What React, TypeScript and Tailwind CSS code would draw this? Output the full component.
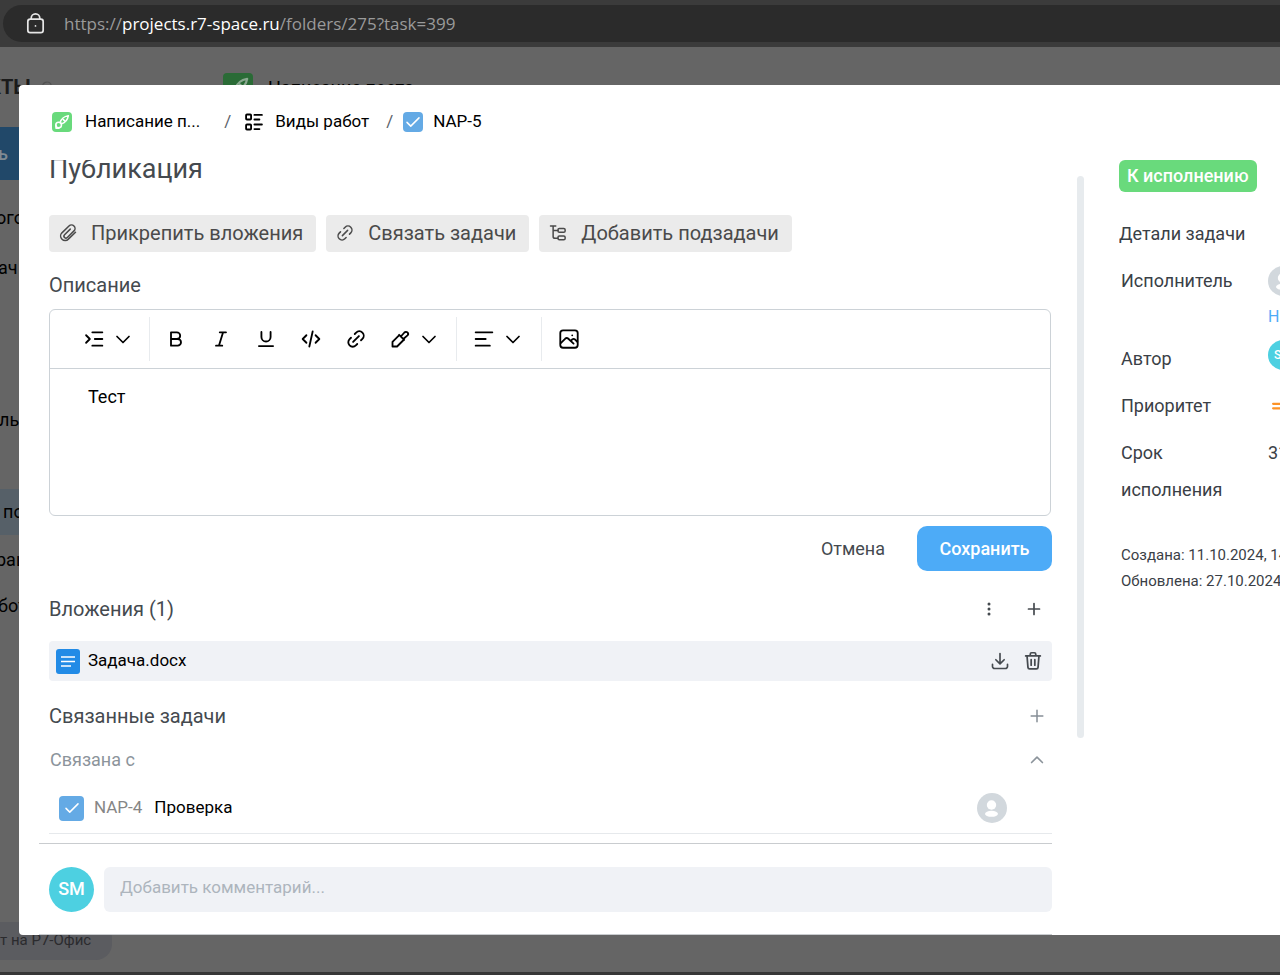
import type { ReactNode } from "react";

type IconProps = {
  size?: number;
  stroke?: number;
  className?: string;
  children: ReactNode;
};

function Icon({ size = 24, stroke = 1.8, className = "", children }: IconProps) {
  return (
    <svg
      width={size}
      height={size}
      viewBox="0 0 24 24"
      fill="none"
      stroke="currentColor"
      strokeWidth={stroke}
      strokeLinecap="round"
      strokeLinejoin="round"
      className={`shrink-0 ${className}`}
      aria-hidden="true"
    >
      {children}
    </svg>
  );
}

const linkPath = (
  <>
    <path d="M8.5 15.5l7-7" />
    <path d="M10.500 6l1.700-1.700a5.300 5.300 0 0 1 7.500 7.500L18 13.500" />
    <path d="M13.500 18l-1.700 1.700a5.300 5.300 0 0 1-7.500-7.500L6 10.500" />
  </>
);

const plusPath = <path d="M12 5v14M5 12h14" />;

function BrushBadge({ size, className }: { size: number; className: string }) {
  return (
    <span className={`flex shrink-0 items-center justify-center ${className}`}>
      <Icon size={size} stroke={2}>
        <path d="M20.500 3.500C15 4.500 11 8 9.500 12.500l2 2C16 13 19.500 9 20.500 3.500z" />
        <path d="M13.500 8.500l2 2" />
        <circle cx="7.500" cy="16" r="3.800" />
        <path d="M4 16v4.200h4" />
      </Icon>
    </span>
  );
}

function TaskBadge({ className }: { className: string }) {
  return (
    <span
      className={`flex shrink-0 items-center justify-center bg-[#64aae5] text-white ${className}`}
    >
      <Icon size={18} stroke={2}>
        <path d="M4 12.500l5 5L20 6.500" />
      </Icon>
    </span>
  );
}

function EmptyAvatar() {
  return (
    <svg width="30" height="30" viewBox="0 0 30 30" className="shrink-0" aria-hidden="true">
      <circle cx="15" cy="15" r="15" fill="#d2d8dd" />
      <circle cx="14.500" cy="12" r="4.700" fill="#fff" />
      <ellipse cx="14.500" cy="20.800" rx="6.500" ry="3" fill="#fff" />
    </svg>
  );
}

const actions = [
  {
    label: "Прикрепить вложения",
    icon: (
      <path d="M22 11l-9.500 9.200a6 6 0 0 1-8.600-8.400l9.400-9.200a4.700 4.700 0 0 1 6.700 6.600l-8.900 8.800a2.600 2.600 0 0 1-3.700-3.700l7.600-7.500" />
    ),
  },
  { label: "Связать задачи", icon: linkPath },
  {
    label: "Добавить подзадачи",
    icon: (
      <>
        <path d="M2 2.500h7M5.500 2.500V16.500a2.500 2.500 0 0 0 2.500 2.500h4M5.500 8.500H12" />
        <rect x="12" y="6" width="9.500" height="5" rx="1.800" />
        <rect x="12" y="16" width="9.500" height="5" rx="1.800" />
      </>
    ),
  },
];

const textTools = [
  {
    label: "Жирный",
    icon: <path d="M6 4h7a4 4 0 0 1 0 8H6zM6 12h8a4 4 0 0 1 0 8H6z" />,
  },
  { label: "Курсив", icon: <path d="M10.500 4H18M6 20h7.500M14.500 4l-5 16" /> },
  { label: "Подчёркнутый", icon: <path d="M6.500 3.500V9.500a5.500 5.500 0 0 0 11 0V3.500M3.500 20.500h17" /> },
  { label: "Код", icon: <path d="M6.500 7.500L2 12l4.500 4.500M17.500 7.500L22 12l-4.500 4.500M14 3l-4 18" /> },
  { label: "Ссылка", icon: linkPath },
];

function ToolMenu({ label, children }: { label: string; children: ReactNode }) {
  return (
    <button
      type="button"
      aria-label={label}
      className="flex h-11 items-center gap-[5px] px-2.5"
    >
      <Icon size={20} stroke={2.2} className="mx-0.5">
        {children}
      </Icon>
      <Icon stroke={1.7}>
        <path d="M6 9.500l6 6 6-6" />
      </Icon>
    </button>
  );
}

function Toolbar() {
  return (
    <div className="flex h-[59px] items-center border-b border-[#ccd2d7] pl-[22px] text-black">
      <div className="flex border-r border-[#e8ebee] pr-1">
        <ToolMenu label="Отступ">
          <path d="M2.500 7.500L7 12l-4.500 4.500M10 4h12M13 12h9M10 20h12" />
        </ToolMenu>
      </div>
      <div className="flex border-r border-[#e8ebee] pr-[5px] pl-[3px]">
        {textTools.map((tool) => (
          <button
            key={tool.label}
            type="button"
            aria-label={tool.label}
            className="flex h-11 w-[45px] items-center justify-center"
          >
            <Icon size={20} stroke={2.2}>
              {tool.icon}
            </Icon>
          </button>
        ))}
        <ToolMenu label="Цвет">
          <path d="M10.500 8L3 15.500V21h5.500L16 13.500" />
          <path d="M11 7l6 6M13 9l4.300-4.800a2.500 2.500 0 0 1 3.700 3.500L16 12" />
        </ToolMenu>
      </div>
      <div className="flex border-r border-[#e8ebee] pr-1.5 pl-[5px]">
        <ToolMenu label="Выравнивание">
          <path d="M2 4h20M2 12h12M2 20h17" />
        </ToolMenu>
      </div>
      <div className="flex pl-1">
        <button
          type="button"
          aria-label="Изображение"
          className="flex h-11 w-[45px] items-center justify-center"
        >
          <Icon size={22} stroke={2}>
            <rect x="2.500" y="2.500" width="19" height="19" rx="3" />
            <path d="M3 16.500l5-5c1-.9 2-.9 3 0l6 5.500M14 14l1.500-1.500c1-.9 2-.9 3 0L21 15M15.500 8h.01" />
          </Icon>
        </button>
      </div>
    </div>
  );
}

function Breadcrumbs() {
  return (
    <nav className="flex h-[75px] items-center pb-0.5 pl-[3px] text-[17px] text-black">
      <a href="#project" className="flex items-center gap-[13px]">
        <BrushBadge size={18} className="size-5 rounded bg-[#69da7c] text-white" />
        Написание п...
      </a>
      <span className="ml-6 text-[#5b6269]">/</span>
      <a href="#boards" className="ml-[13px] flex items-center gap-[11px]">
        <Icon size={20} stroke={2.2}>
          <rect x="2.500" y="3" width="6" height="6" rx="1" />
          <rect x="2.500" y="15" width="6" height="6" rx="1" />
          <path d="M12.500 3.500h9M12.500 9h6M12.500 15h9M12.500 20.500h6" />
        </Icon>
        Виды работ
      </a>
      <span className="ml-[17px] text-[#5b6269]">/</span>
      <a href="#task" className="ml-2.5 flex items-center gap-2.5">
        <TaskBadge className="size-5 rounded" />
        NAP-5
      </a>
    </nav>
  );
}

function Attachments() {
  return (
    <section className="mt-6">
      <div className="flex h-7 items-center pr-1.5">
        <h2 className="mr-auto text-xl">Вложения (1)</h2>
        <button type="button" aria-label="Ещё">
          <Icon stroke={3}>
            <path d="M12 7h.01M12 12h.01M12 17h.01" />
          </Icon>
        </button>
        <button type="button" aria-label="Добавить вложение" className="ml-[21px]">
          <Icon size={24} stroke={1.7}>
            <path d="M12 6.500v11M6.500 12h11" />
          </Icon>
        </button>
      </div>
      <div className="mt-[18px] flex h-10 items-center rounded bg-[#f0f2f6] pr-2 pl-[7px]">
        <svg width="24" height="25" viewBox="0 0 24 25" aria-hidden="true">
          <rect width="24" height="25" rx="3" fill="#228be6" />
          <path d="M5 8h14M5 12.500h14M5 17h10" stroke="#fff" strokeWidth="1.500" />
        </svg>
        <a href="#file" className="mr-auto ml-2 text-[17px] text-black">
          Задача.docx
        </a>
        <button type="button" aria-label="Скачать">
          <Icon size={20} stroke={2}>
            <path d="M12 3v12M7 10.500l5 5 5-5M3 16v2.500A2.500 2.500 0 0 0 5.500 21h13a2.500 2.500 0 0 0 2.500-2.500V16" />
          </Icon>
        </button>
        <button type="button" aria-label="Удалить" className="ml-3">
          <Icon size={22} stroke={1.900}>
            <path d="M4 6.500h16M9 6V4.500A1.500 1.500 0 0 1 10.500 3h3A1.500 1.500 0 0 1 15 4.500V6M5.500 6.500l1 12.500a1.800 1.800 0 0 0 1.800 1.700h7.400a1.800 1.800 0 0 0 1.800-1.700l1-12.500M10 10.500v6M14 10.500v6" />
          </Icon>
        </button>
      </div>
    </section>
  );
}

function LinkedTasks() {
  return (
    <section className="mt-[21px]">
      <div className="flex h-7 items-center justify-between pr-[5px]">
        <h2 className="text-xl">Связанные задачи</h2>
        <button type="button" aria-label="Связать задачу" className="text-[#868e96]">
          <Icon size={20} stroke={1.800}>
            {plusPath}
          </Icon>
        </button>
      </div>
      <button
        type="button"
        className="mt-4 flex h-7 w-full items-center justify-between pr-[5px] pl-px text-lg text-[#8c949b]"
      >
        Связана с
        <Icon size={20} stroke={2}>
          <path d="M5.500 15l6.500-6.500 6.500 6.500" />
        </Icon>
      </button>
      <div className="mt-[9px] flex h-[51px] items-center border-b border-[#e6e9ec] pr-[45px] pl-2.5">
        <TaskBadge className="size-[25px] rounded" />
        <span className="ml-2.5 text-[17px] text-[#868686]">NAP-4</span>
        <a href="#nap-4" className="mr-auto ml-3 text-[17px] text-black">
          Проверка
        </a>
        <EmptyAvatar />
      </div>
    </section>
  );
}

function Details() {
  return (
    <aside className="ml-[35px] w-[161px] shrink-0 overflow-hidden pt-[75px] whitespace-nowrap text-lg text-[#3a4046]">
      <button
        type="button"
        className="flex h-8 items-center rounded-md bg-[#69da7c] px-2 text-lg font-medium text-white"
      >
        К исполнению
      </button>
      <h2 className="mt-7 leading-7">Детали задачи</h2>
      <dl className="mt-3.5 ml-0.5 grid grid-cols-[147px_1fr] gap-y-2.5 leading-[37px]">
        <dt>Исполнитель</dt>
        <dd className="pt-1">
          <EmptyAvatar />
          <a href="#assign" className="mt-2 block text-base leading-[26px] text-[#4dabf7]">
            На
          </a>
        </dd>
        <dt>Автор</dt>
        <dd>
          <span className="flex size-[30px] items-center justify-center rounded-full bg-[#4dd0e1] text-xs font-medium text-white">
            SM
          </span>
        </dd>
        <dt>Приоритет</dt>
        <dd className="flex items-center pl-1">
          <Icon size={18} stroke={3} className="text-[#fd9327]">
            <path d="M1.500 9h20M1.500 15h20" />
          </Icon>
        </dd>
        <dt className="whitespace-normal">
          Срок
          <br />
          исполнения
        </dt>
        <dd>31</dd>
      </dl>
      <div className="mt-[34px] ml-0.5 text-[15px] leading-[26px]">
        <p>Создана: 11.10.2024, 14</p>
        <p>Обновлена: 27.10.2024</p>
      </div>
    </aside>
  );
}

function TaskDialog() {
  return (
    <div
      role="dialog"
      aria-label="Публикация"
      className="z-10 col-start-1 row-start-1 mt-[38px] mb-[37px] ml-[19px] flex rounded-l bg-white"
    >
      <div className="flex min-w-0 flex-1 flex-col pl-5">
        <div className="pl-2.5">
          <Breadcrumbs />
          <div className="overflow-hidden text-[#454a4f]">
            <h1 className="-mt-[7px] text-[27px] leading-8">Публикация</h1>
            <div className="mt-[30px] flex gap-2.5">
              {actions.map((action) => (
                <button
                  key={action.label}
                  type="button"
                  className="flex h-[37px] items-center gap-3.5 rounded bg-[#ebebeb] pr-[13px] pb-0.5 pl-2.5 text-xl text-[#4a4a4a]"
                >
                  <Icon size={18} stroke={2}>
                    {action.icon}
                  </Icon>
                  {action.label}
                </button>
              ))}
            </div>
            <label htmlFor="description" className="mt-[19px] block text-xl leading-7">
              Описание
            </label>
            <div className="mt-2.5 mr-px rounded-md border border-[#ccd2d7]">
              <Toolbar />
              <textarea
                id="description"
                defaultValue="Тест"
                className="block h-[146px] w-full resize-none rounded-md px-[38px] py-3.5 text-lg leading-7 text-black outline-none"
              />
            </div>
            <div className="mt-2.5 flex justify-end gap-2 text-lg">
              <button type="button" className="h-[45px] px-6">
                Отмена
              </button>
              <button
                type="button"
                className="h-[45px] w-[135px] rounded-[10px] bg-[#4dabf7] font-medium text-white"
              >
                Сохранить
              </button>
            </div>
            <Attachments />
            <LinkedTasks />
          </div>
        </div>
        <form className="mt-[9px] flex h-[92px] items-center gap-2.5 border-y border-[#c9cccf] pl-2.5">
          <span className="flex size-[45px] shrink-0 items-center justify-center rounded-full bg-[#4dd0e1] text-lg font-medium text-white">
            SM
          </span>
          <input
            type="text"
            aria-label="Комментарий"
            placeholder="Добавить комментарий..."
            className="h-[45px] min-w-0 flex-1 rounded-md bg-[#f0f2f6] px-4 pb-1 text-[17px] outline-none placeholder:text-[#adb5bd]"
          />
        </form>
      </div>
      <div className="mt-[91px] ml-[25px] h-[562px] w-[7px] shrink-0 rounded-full bg-[#e7ebee]" />
      <Details />
    </div>
  );
}

function PageBehind() {
  return (
    <div className="col-start-1 row-start-1 flex overflow-hidden whitespace-nowrap text-lg text-black">
      <div className="w-[223px] shrink-0">
        <div className="flex h-20 items-center">
          <span className="-ml-3 text-xl font-bold text-[#1b1b1b]">КТЫ</span>
          <Icon size={16} className="ml-2 text-[#515151]">
            <path d="M6 12a6 5 0 1 1 12-4c0 3-3 6-6 8" />
          </Icon>
          <span className="ml-[98px] text-xl text-[#333] italic">«</span>
        </div>
        <div className="flex h-[53px] items-center bg-[#214869] font-medium text-[#808a93]">
          <span className="-ml-0.5">ь</span>
        </div>
        <p className="mt-[15px] -ml-1 leading-[46px]">ого</p>
        <p className="mt-1 -ml-0.5 leading-[46px]">ач</p>
        <p className="mt-[106px] -ml-px leading-[46px]">ль</p>
        <p className="mt-[46px] bg-[#566068] pl-[3px] leading-[46px]">по</p>
        <p className="mt-0.5 -ml-1 leading-[46px]">рац</p>
        <p className="-ml-0.5 leading-[46px]">бот</p>
        <div className="mt-[293px] flex h-[38px] w-28 items-center rounded-r-2xl bg-[#5b5c60] text-[15px] text-[#2b2b2e]">
          т на Р7-Офис
        </div>
      </div>
      <div className="flex h-20 items-center gap-[15px] pt-0.5">
        <BrushBadge size={26} className="size-[30px] rounded bg-[#2a6b36] text-[#8aa890]" />
        <span>Написание поста</span>
      </div>
    </div>
  );
}

export default function App() {
  return (
    <div className="flex min-h-screen flex-col bg-[#656565] font-[Roboto,'Liberation_Sans',sans-serif]">
      <header className="bg-[#3b3b3b] py-[5px] pl-[3px]">
        <div className="flex h-[37px] items-center rounded-l-full bg-[#2b2b2b] pl-[21px] font-['Open_Sans','Noto_Sans',sans-serif] text-[17px] text-[#9a9a9a]">
          <Icon size={23} stroke={1.800} className="text-[#e6e6e6]">
            <rect x="4" y="7.500" width="16" height="14" rx="2.500" />
            <path d="M7.500 7.500V6.500a4.500 4.500 0 0 1 9 0V7.500M12 14.500h.01" />
          </Icon>
          <span className="ml-[17px]">
            https://<span className="text-white">projects.r7-space.ru</span>
            /folders/275?task=399
          </span>
        </div>
      </header>
      <main className="grid flex-1 grid-cols-[minmax(0,1fr)]">
        <PageBehind />
        <TaskDialog />
      </main>
      <footer className="h-[3px] bg-[#363636]" />
    </div>
  );
}
